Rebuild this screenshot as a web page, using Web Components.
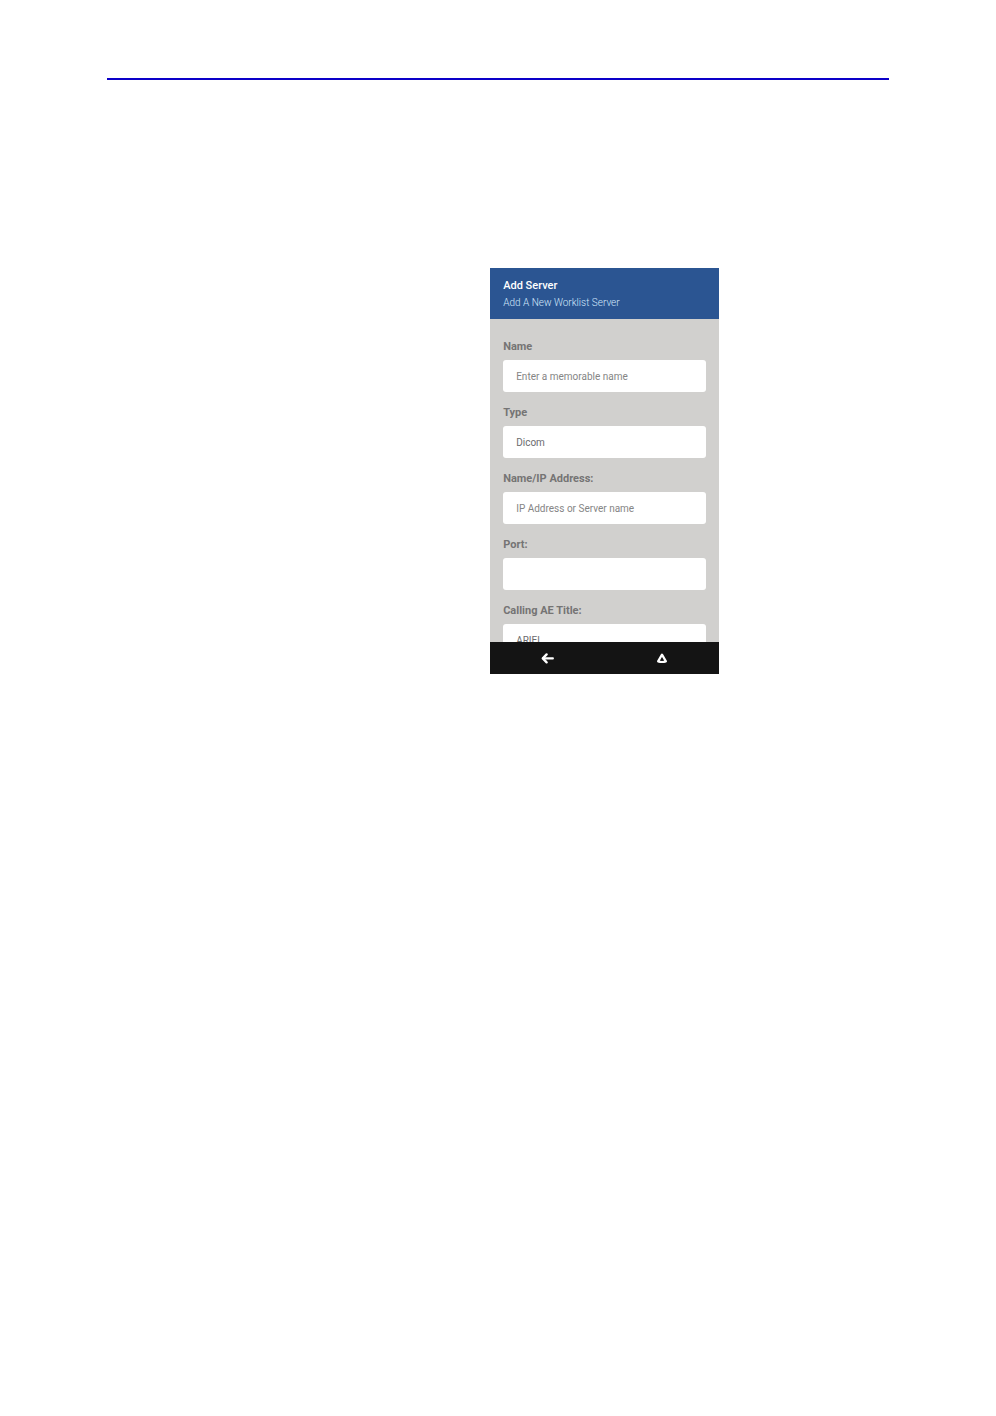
<!DOCTYPE html>
<html lang="en">
<head>
<meta charset="UTF-8">
<meta name="viewport" content="width=device-width, initial-scale=1.0">
<title>Add Server</title>
<style>
  body {
    margin: 0;
    background: #fff;
    font-family: Roboto, "Liberation Sans", sans-serif;
  }
</style>
</head>
<body>

<manual-page>
  <phone-screen>
    <screen-header slot="header">
      Add Server
      <span slot="subtitle">Add A New Worklist Server</span>
    </screen-header>
    <form-field label="Name" placeholder="Enter a memorable name"></form-field>
    <form-field label="Type" type="select" value="Dicom"></form-field>
    <form-field label="Name/IP Address:" placeholder="IP Address or Server name"></form-field>
    <form-field label="Port:"></form-field>
    <form-field label="Calling AE Title:" value="ARIEL"></form-field>
    <nav-bar slot="nav"></nav-bar>
  </phone-screen>
</manual-page>

<script>
class ManualPage extends HTMLElement {
  constructor() {
    super();
    this.attachShadow({ mode: 'open' });

    this.shadowRoot.innerHTML = `
      <style>
        :host {
          display: block;
          box-sizing: border-box;
          min-height: 100vh;
          padding: 78px 107px;
        }

        hr {
          margin: 0;
          border: 0;
          border-top: 2px solid #0c00c8;
        }

        main {
          display: grid;
          grid-template-columns: 49% 1fr;
          padding-top: 188px;
        }

        .figure {
          grid-column: 2;
        }
      </style>

      <hr>
      <main>
        <div class="figure"><slot></slot></div>
      </main>
    `;
  }
}

class PhoneScreen extends HTMLElement {
  constructor() {
    super();
    this.attachShadow({ mode: 'open' });

    this.shadowRoot.innerHTML = `
      <style>
        :host {
          display: flex;
          flex-direction: column;
          max-width: 229px;
          height: 406px;
          background: #d1d0ce;
        }

        form {
          flex: 1;
          min-height: 0;
          display: flex;
          flex-direction: column;
          gap: 13px;
          padding: 20px 13px 0;
          overflow-y: auto;
          scrollbar-width: none;
        }
      </style>

      <slot name="header"></slot>
      <form><slot></slot></form>
      <slot name="nav"></slot>
    `;
  }
}

class ScreenHeader extends HTMLElement {
  constructor() {
    super();
    this.attachShadow({ mode: 'open' });

    this.shadowRoot.innerHTML = `
      <style>
        :host {
          display: block;
          flex: none;
          padding: 10px 13px 8px;
          background: #2b5592;
          color: #fff;
        }

        h1 {
          margin: 0;
          font-size: 11px;
          font-weight: 500;
          line-height: 16px;
        }

        p {
          margin: 0;
          padding-top: 1px;
          font-size: 10px;
          font-weight: 300;
          line-height: 16px;
          color: #d3e8fc;
        }
      </style>

      <header>
        <h1><slot></slot></h1>
        <p><slot name="subtitle"></slot></p>
      </header>
    `;
  }
}

class FormField extends HTMLElement {
  constructor() {
    super();
    this.attachShadow({ mode: 'open' });

    this.shadowRoot.innerHTML = `
      <style>
        :host {
          display: flex;
          flex-direction: column;
          flex: none;
          gap: 5px;
        }

        label {
          font-size: 11px;
          font-weight: 700;
          line-height: 16px;
          color: #757474;
        }

        input,
        select {
          appearance: none;
          box-sizing: border-box;
          width: 100%;
          height: 32px;
          margin: 0;
          padding: 0 13px;
          border: 0;
          border-radius: 3px;
          background: #fff;
          font-family: inherit;
          font-size: 10px;
          color: #6b6b6e;
        }

        input::placeholder {
          color: #858585;
          opacity: 1;
        }
      </style>

      <label for="control"></label>
    `;
  }

  connectedCallback() {
    const isSelect = this.getAttribute('type') === 'select';
    const control = document.createElement(isSelect ? 'select' : 'input');
    const value = this.getAttribute('value') || '';

    control.id = 'control';
    if (isSelect) {
      control.add(new Option(value));
    } else {
      control.type = 'text';
      control.value = value;
      control.placeholder = this.getAttribute('placeholder') || '';
    }

    this.shadowRoot.querySelector('label').textContent = this.getAttribute('label');
    this.shadowRoot.appendChild(control);
  }
}

class NavBar extends HTMLElement {
  constructor() {
    super();
    this.attachShadow({ mode: 'open' });

    this.shadowRoot.innerHTML = `
      <style>
        :host {
          display: block;
          flex: none;
          background: #141414;
        }

        nav {
          display: flex;
        }

        button {
          flex: 1;
          display: flex;
          align-items: center;
          justify-content: center;
          height: 32px;
          padding: 0;
          border: 0;
          background: none;
          color: #fff;
          cursor: pointer;
        }

        svg {
          display: block;
          fill: none;
          stroke: currentColor;
          stroke-linecap: round;
          stroke-linejoin: round;
        }
      </style>

      <nav>
        <button type="button" aria-label="Back" id="back">
          <svg width="14" height="12" viewBox="0 0 14 12" stroke-width="2.3">
            <path d="M6.6 2.4 L2.8 6.4 L6.6 10.4"/>
            <path d="M3.4 6.4 H12.8"/>
          </svg>
        </button>
        <button type="button" aria-label="Home">
          <svg width="12" height="12" viewBox="0 0 12 12" stroke-width="2.2">
            <path d="M6 2.6 L9.9 9.4 Q6 10.6 2.1 9.4 Z"/>
          </svg>
        </button>
      </nav>
    `;
  }

  connectedCallback() {
    this.shadowRoot
      .getElementById('back')
      .addEventListener('click', () => history.back());
  }
}

customElements.define('manual-page', ManualPage);
customElements.define('phone-screen', PhoneScreen);
customElements.define('screen-header', ScreenHeader);
customElements.define('form-field', FormField);
customElements.define('nav-bar', NavBar);
</script>
</body>
</html>
